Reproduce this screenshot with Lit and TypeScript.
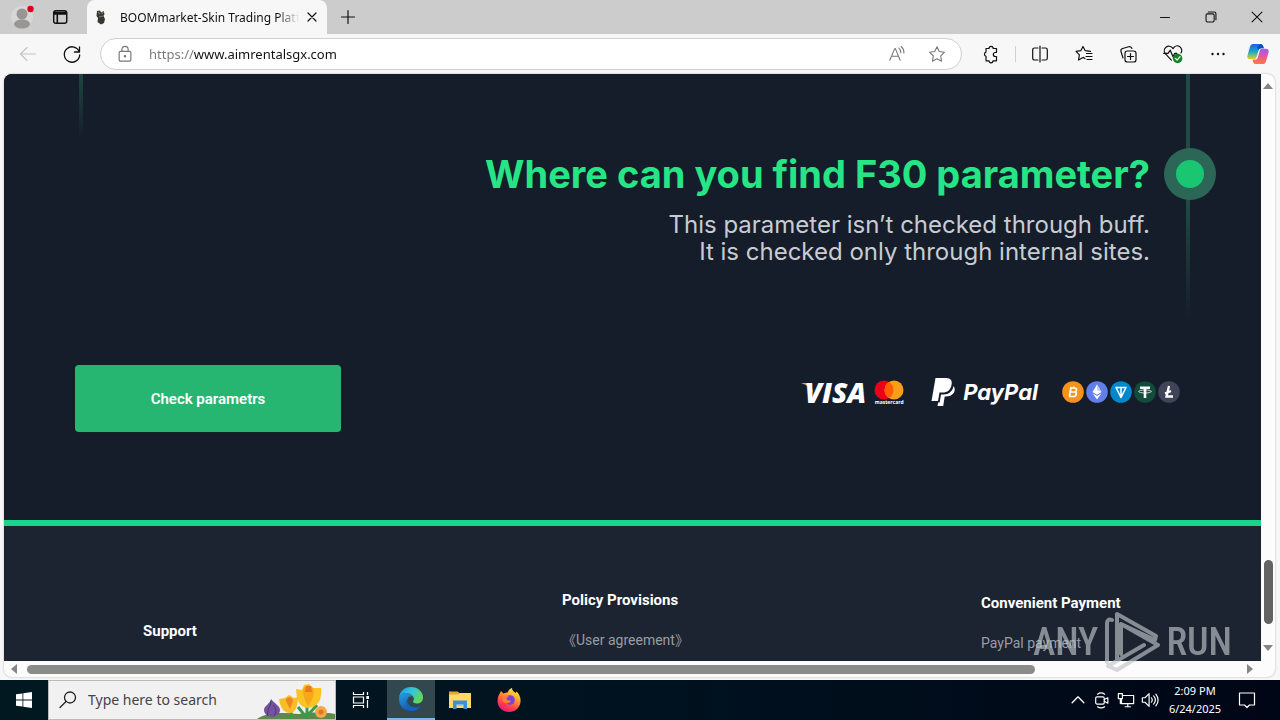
import { LitElement, html, css, svg } from "lit";
import { customElement } from "lit/decorators.js";

const line = (size: number, body: unknown, width = 1) => html`
  <svg width=${size} height=${size} viewBox="0 0 20 20" fill="none" stroke="currentColor"
    stroke-width=${width} stroke-linecap="round" stroke-linejoin="round" aria-hidden="true">${body}</svg>`;

const icons = {
  profile: html`<svg width="24" height="24" viewBox="0 0 24 24" aria-hidden="true">
    <circle cx="12" cy="12" r="11" fill="#d8d7d5"/><circle cx="12" cy="9" r="5.500" fill="#989693"/>
    <ellipse cx="12" cy="19" rx="8" ry="4.500" fill="#989693"/><circle cx="20.500" cy="4" r="3.200" fill="#d8001d"/></svg>`,
  tabs: line(18, svg`<rect x="3" y="3" width="14.500" height="14" rx="2.500" stroke-width="1.600"/><path d="M3.500 5h13.500M3.500 6.500h13.500M7 6v11" stroke-width="1.800"/>`),
  favicon: html`<svg width="16" height="16" viewBox="0 0 16 16" aria-hidden="true">
    <path d="M4 2l3-.5 1 2 2.500-1.500 1 3-1 2 1.500 3-1 4-3 1.500L4.500 13l.5-4-1.500-2z" fill="#343832"/>
    <path d="M5 3l2 2M9 5l1-2M6 8l4-1" stroke="#777d60" stroke-width="1.200"/></svg>`,
  close: line(16, svg`<path d="M5 5l10 10M15 5L5 15" stroke-width="1.500"/>`),
  plus: line(20, svg`<path d="M10 3.500v13M3.500 10h13"/>`, 1.2),
  min: line(18, svg`<path d="M5 10.500h10"/>`, 1.2),
  restore: line(18, svg`<rect x="4.500" y="6.500" width="9" height="9" rx="1.500"/><path d="M7 4.500h6.500a2 2 0 0 1 2 2v6.500"/>`, 1.2),
  closeWin: line(18, svg`<path d="M4.500 4.500l11 11M15.500 4.500l-11 11"/>`, 1.2),
  back: line(20, svg`<path d="M17.500 10h-15M9 3.500L2.500 10 9 16.500"/>`, 1.1),
  reload: line(20, svg`<path d="M17.300 8A7.700 7.700 0 1 0 17.700 11M17.500 3v5h-5"/>`, 1.3),
  lock: line(18, svg`<rect x="3.500" y="7" width="13" height="11" rx="1.500"/><path d="M6.500 7V5a3.500 3.500 0 0 1 7 0v2"/><circle cx="10" cy="12.500" r=".8" fill="currentColor"/>`, 1.3),
  read: line(18, svg`<path d="M2 17L7.500 4h.7L13.500 17M4 12.500h7.500M12 3.500c1.600 1.200 2.200 2.700 2.200 5M14.700 1.700c2.300 2 3 4.300 3 7.300"/>`, 1.2),
  star: line(18, svg`<path d="M10 2l2.500 5.300 5.700.8-4.100 4 1 5.900L10 15.200 4.900 18l1-5.900-4.100-4 5.700-.8z"/>`, 1.2),
  puzzle: line(20, svg`<path d="M5 4.500h3a2.100 2.100 0 0 1 4.200 0h3.300v4h-1.200a2 2 0 0 0 0 4h1.200v4.300h-3.500a2 2 0 0 1-4 0H5v-4.500a2.200 2.200 0 0 1 0-4.200z"/>`, 1.2),
  split: line(20, svg`<path d="M8 4H4.500A1.800 1.800 0 0 0 2.700 5.800v8.400A1.800 1.800 0 0 0 4.500 16H8M12 4h3.500a1.800 1.800 0 0 1 1.800 1.800v8.400a1.800 1.800 0 0 1-1.800 1.800H12M10 2v16"/>`, 1.2),
  favs: line(20, svg`<path d="M11 14.500l-2-1.100-4.500 2.600.9-5.100L2 7.400l4.800-.7L9 2.500l2.200 4.200 5.300.7M12.500 9.500h5.500M12 12.500h6M13 15.500h5"/>`, 1.2),
  collections: line(20, svg`<rect x="7" y="7" width="11" height="11" rx="2.300"/><path d="M12.500 9.500v6M9.500 12.500h6M5 14L3 7.500a2.500 2.500 0 0 1 1.700-3l6-1.800a2.500 2.500 0 0 1 3.200 1.800"/>`, 1.2),
  heart: line(22, svg`<path d="M8.500 15.500L3 9.700A4 4 0 0 1 9.500 4.500L10 5l.5-.5A4 4 0 0 1 17.300 9M1.500 9.500h4l2-3 2.500 6 1.500-3h2"/><circle cx="14.200" cy="14" r="4.300" fill="#128324" stroke="none"/><path d="M12.200 14l1.500 1.500 2.700-3" stroke="#fff"/>`, 1.1),
  more: html`<svg width="20" height="20" viewBox="0 0 20 20" fill="currentColor" aria-hidden="true"><circle cx="4.500" cy="10" r="1.200"/><circle cx="10" cy="10" r="1.200"/><circle cx="15.500" cy="10" r="1.200"/></svg>`,
  copilot: html`<svg width="24" height="24" viewBox="0 0 24 24" aria-hidden="true">
    <defs><linearGradient id="ca" x1="0" y1="0" x2="0" y2="1"><stop stop-color="#1665d8"/><stop offset=".5" stop-color="#18a6cf"/><stop offset="1" stop-color="#e8d31f"/></linearGradient>
    <linearGradient id="cb" x1="0" y1="0" x2="0" y2="1"><stop stop-color="#9a5cf0"/><stop offset=".5" stop-color="#e9569c"/><stop offset="1" stop-color="#ff7a3a"/></linearGradient></defs>
    <path d="M7 2h7.500c1.500 0 2.300 1 2.700 2.300l.6 1.900h-2.500c-1.500 0-2.300.8-2.700 2l-2 6.800c-.5 1.500-1.200 2.300-3 2.300H4.200c-2.500 0-3.400-1.600-2.700-4l2.500-8.500C4.600 2.900 5.500 2 7 2z" fill="url(#ca)"/>
    <path d="M17 22H9.800c-1.500 0-2.300-1-2.700-2.300L6.500 17.800H9c1.500 0 2.300-.8 2.700-2l2-6.800c.5-1.500 1.200-2.300 3-2.300h3.100c2.500 0 3.400 1.600 2.700 4L20 19.200c-.6 1.900-1.500 2.800-3 2.800z" fill="url(#cb)"/>
    <path d="M14.500 2c1.500 0 2.300 1 2.700 2.300l.6 1.900h-2.500c-1.500 0-2.300.8-2.700 2L11 5z" fill="#1549bd"/></svg>`,
  windows: html`<svg width="16" height="16" viewBox="0 0 16 16" fill="#fff" aria-hidden="true"><path d="M0 2.300l6.500-.9v6.200H0zM7.300 1.300L16 0v7.600H7.300zM0 8.400h6.500v6.200L0 13.700zM7.300 8.400H16V16l-8.700-1.300z"/></svg>`,
  search: line(20, svg`<circle cx="12" cy="7.500" r="5.500"/><path d="M8 11.500L2 17.500"/>`, 1.3),
  taskView: html`<svg width="18" height="18" viewBox="0 0 18 18" fill="none" stroke="#fff" stroke-width="1.200" aria-hidden="true"><path d="M1.500 1v2.500h10V1M1.500 17v-2.500h10V17M1.500 6h10v6h-10zM15.500 1v3M15.500 9v8"/><path d="M14.300 5h2.700v3h-2.700z" fill="#fff" stroke="none"/></svg>`,
  edge: html`<svg width="26" height="26" viewBox="0 0 26 26" aria-hidden="true">
    <defs><linearGradient id="ea" x1="0" y1="0" x2="1" y2=".5"><stop stop-color="#1d9bde"/><stop offset=".5" stop-color="#2fc3df"/><stop offset="1" stop-color="#62d957"/></linearGradient>
    <linearGradient id="eb" x1="0" y1="0" x2=".6" y2="1"><stop stop-color="#2a9de4"/><stop offset="1" stop-color="#0d55a8"/></linearGradient></defs>
    <path d="M1 12C1.500 5.500 6.500 1 13 1c7 0 12 5 12 10.500 0 4-3 6-6 6-2.500 0-4-1-4-2 0-.7.900-1 .900-2.500C15.900 10 12 7 8 7c-3.500 0-6 2-7 5z" fill="url(#ea)"/>
    <path d="M1 13C1 9.500 4.500 7 8.500 7c3 0 5.500 1.500 6.500 3.500-3-1.200-6 1-6 4.500 0 4 4 7.500 9 6.500 2-.4 3.500-1.200 4.500-1.500C20.500 23.300 17 25 13 25 6 25 1 20 1 13z" fill="url(#eb)"/>
    <path d="M9.500 12.500c-1 5 2 9 8.500 9 2 0 3.500-1 4.500-1.500C20.500 23.300 17 25 13 25c-5-1-7-8-3.500-12.500z" fill="#1264bd"/></svg>`,
  explorer: html`<svg width="24" height="22" viewBox="0 0 24 22" aria-hidden="true"><path d="M1 2.500h8.500L11.500 4H23v15H1z" fill="#e7a43a"/><path d="M1 5.500h9L12 4h11v15H1z" fill="#ffd869"/><path d="M5 11.500h14V20h-3.500v-4h-7v4H5z" fill="#3c8fd0"/><path d="M8.500 15h7v1.500h-7z" fill="#77b9e6"/></svg>`,
  firefox: html`<svg width="26" height="26" viewBox="0 0 26 26" aria-hidden="true">
    <defs><linearGradient id="fa" x1=".8" y1="0" x2=".3" y2="1"><stop stop-color="#fff24f"/><stop offset=".4" stop-color="#ff9a2b"/><stop offset=".75" stop-color="#ff3b50"/><stop offset="1" stop-color="#e31587"/></linearGradient></defs>
    <path d="M5 4l2.500 2.500c1.500-.8 3-1 4-1C12.500 3.500 14 1.500 16 1c0 2.500 2 3.500 3.500 5l1.200-1.500C23.500 7.500 25 11 24.500 15c-.7 6-5.500 10-11.500 10S1.500 20.500 1.500 14c0-3 1-6 2.500-8z" fill="url(#fa)"/>
    <circle cx="14" cy="13" r="4.800" fill="#7b40d8"/><path d="M7 9c2-1 4.500-.5 6 1-1.500 0-2.500 1-2.500 2 0 1.500 3 1 4.500 2-1.500 2.500-5 3-7.500 1C6 13.500 6 11 7 9z" fill="#ff7d33"/></svg>`,
  flowers: html`<svg width="80" height="38" viewBox="0 0 80 38" aria-hidden="true">
    <path d="M2 38c12-8 28-6 42-5 12-2 26-2 36 0v5z" fill="#5d8a4a"/>
    <path d="M52 36V22M36 38V24M43 26l8 10 11-12" stroke="#3b9a4a" stroke-width="3" fill="none"/>
    <path d="M16 18c4 5 9 7 9 11 0 4-4 7-8 7s-8-3-8-7c0-4 6-6 7-11z" fill="#74529f"/><path d="M16 20c0 6-5 9-3 15M18 24c3 3 4 7 1 11" stroke="#4b3877" fill="none"/>
    <path d="M41 8l6 1 2-5 5-1 4 4 8 0c1 3 0 8-1 12-3 6-8 8-12 8-9-1-11-7-12-19z" fill="#fbc423"/>
    <path d="M48 9c1-6 9-6 11 0 0 6-3 13-6 16-3-4-5-10-5-16z" fill="#f5a91a"/><path d="M50 11l1-6 5 0 1 6z" fill="#ed7a1a"/>
    <path d="M24 18l6-1 4-3 5 3 4-1c0 8-2 16-8 16-7 0-10-7-11-14z" fill="#f9bd2a"/><path d="M31 20c0-5 6-5 7 0l-3 8z" fill="#ee8520"/>
    <circle cx="66" cy="31" r="6" fill="#f0a94d"/><circle cx="66" cy="31" r="2.500" fill="#e8731b"/></svg>`,
  chevron: line(18, svg`<path d="M3.500 13l6.500-6.500 6.500 6.500"/>`, 1.5),
  meet: line(18, svg`<rect x="3" y="6.500" width="9.500" height="8" rx="1.500"/><path d="M12.500 9.500l4-2v6l-4-2M5 3.500Q9 .8 13 3.500M5 17.500q4 2.700 8 0"/>`, 1.3),
  network: line(18, svg`<path d="M7 5h11.500v9H5V9M9 17.500h6M12 14v3.500M1.500 3h4.500v5.500H1.500zM3.700 8.500V14"/>`, 1.3),
  sound: line(18, svg`<path d="M1.500 7.500h3L9 3v14l-4.500-4.500h-3zM11.500 7.500q2 2.500 0 5M14 5.500q4 4.500 0 9M16.500 3.500q5 6.500 0 13"/>`, 1.3),
  note: line(20, svg`<path d="M2.500 3h15v12h-5L10 17.500 7.500 15h-5z"/>`, 1.2),
};

@customElement("app-root")
export class AppRoot extends LitElement {
  static styles = css`
    :host { display: flex; flex-direction: column; height: 100vh; position: relative; overflow: hidden; background: #f7f7f7; color: #111; font-family: "Segoe UI", "Noto Sans", sans-serif; font-size: 12px; }
    * { box-sizing: border-box; }
    button { border: 0; padding: 0; margin: 0; background: none; color: inherit; font: inherit; display: grid; place-items: center; flex: none; }
    svg { display: block; flex: none; }
    input { border: 0; outline: 0; padding: 0; background: none; font: inherit; min-width: 0; }
    a { color: inherit; text-decoration: none; }

    .titlebar { display: flex; height: 34px; background: #ccc; flex: none; }
    .corner { display: flex; align-items: center; gap: 17px; padding: 0 18px 0 10px; }
    .tab { display: flex; align-items: center; gap: 11px; width: 240px; padding: 0 7px 0 6px; background: #f7f7f7; border-radius: 8px 8px 0 0; }
    .tab-title { flex: 1; margin-right: -6px; overflow: hidden; white-space: nowrap; mask-image: linear-gradient(90deg, #000 88%, transparent); -webkit-mask-image: linear-gradient(90deg, #000 88%, transparent); }
    .new-tab { width: 42px; }
    .window { display: flex; margin-left: auto; }
    .window button { width: 46px; }

    .toolbar { display: flex; align-items: center; height: 40px; padding: 0 10px 0 18px; flex: none; }
    .nav { display: flex; gap: 24px; padding-right: 18px; }
    .dim { color: #c3c3c3; }
    .address { flex: 1; display: flex; align-items: center; height: 32px; padding: 0 15px; border: 1px solid #d0d0d0; border-radius: 16px; background: #fff; color: #777; }
    .address input { flex: 1; margin-left: 15px; font-size: 13px; -webkit-text-fill-color: transparent; background: linear-gradient(90deg, #777 45px, #111 45px); -webkit-background-clip: text; background-clip: text; }
    .address button { margin-left: 22px; }
    .tools { display: flex; align-items: center; gap: 24px; padding-left: 19px; }
    .tools .divider { width: 1px; height: 16px; background: #d0d0d0; margin: 0 -10px; }
    .tools .assistant { margin-left: -6px; }

    .frame { flex: 1; min-height: 0; display: grid; grid-template-columns: 1fr 14px; grid-template-rows: 1fr 16px; margin: 0 5px 3px 4px; border-radius: 8px; overflow: hidden; background: #fcfcfc; box-shadow: 0 0 2px #aaa; }
    .view { overflow: hidden; background: #1c2431; color: #fff; font-family: Roboto, sans-serif; }
    .hero { padding: 0 45px 88px 71px; background: #151d2b; border-bottom: 6px solid #1cd38c; }
    .step { display: grid; grid-template-columns: 12px 1fr 52px; column-gap: 14px; height: 291px; }
    .trail { width: 4px; height: 66px; margin-left: 4px; background: linear-gradient(#1e463f, #151d2b); }
    .copy { padding-top: 76px; text-align: right; font-family: Inter, sans-serif; }
    h2 { margin: 0; font-size: 38px; line-height: 48px; font-weight: 700; color: #25e585; }
    .copy p { margin: 13px 0 0; font-size: 24px; line-height: 27px; color: #c8ccd2; }
    .rail { height: 246px; padding-top: 74px; background: linear-gradient(#204c43, #204c43 50%, #151d2b) 22px 0 / 4px 100% no-repeat; }
    .dot { display: grid; place-items: center; width: 52px; height: 52px; border-radius: 50%; background: #2b6656; }
    .dot::before { content: ""; width: 28px; height: 28px; border-radius: 50%; background: #1bc673; }
    .actions { display: flex; justify-content: space-between; align-items: flex-start; padding-right: 36px; }
    .check { width: 266px; height: 67px; border-radius: 4px; background: #26b671; font-size: 15px; font-weight: 600; box-shadow: 0 1px 3px #0b2a20; }
    .pay { display: flex; align-items: center; height: 54px; gap: 8px; }
    .visa { display: flex; align-items: center; }
    .visa-name { margin-left: -8px; font: italic 800 28px/30px "Open Sans", sans-serif; }
    .mc { display: grid; justify-items: center; width: 30px; }
    .mc-name { font: 700 5px/5px "Open Sans", sans-serif; }
    .paypal { display: flex; align-items: center; gap: 7px; margin: 0 16px 0 19px; font: italic 700 22px/30px Inter, sans-serif; }
    .coins { display: flex; gap: 2px; }

    .footer { display: grid; grid-template-columns: repeat(3, 1fr); white-space: nowrap; }
    .col { padding: 64px 0 0 139px; }
    .col.support { padding-top: 95px; }
    .col.payment { padding-top: 67px; }
    h3 { margin: 0; font-size: 15px; line-height: 20px; font-weight: 700; }
    .col a { display: block; margin-top: 20px; font-size: 14px; line-height: 20px; color: #999da3; font-family: Roboto, "Noto Sans CJK SC", sans-serif; }

    .vbar { display: flex; flex-direction: column; align-items: center; justify-content: space-between; padding: 8px 0; color: #858585; }
    .vthumb { width: 9px; height: 64px; margin: auto 0 19px; border-radius: 5px; background: #636363; }
    .hbar { display: flex; align-items: center; padding: 0 6px; color: #858585; }
    .hthumb { flex: 0 0 81%; height: 9px; margin: 0 auto 0 7px; border-radius: 5px; background: #8a8c87; }

    .taskbar { display: flex; height: 40px; flex: none; background: linear-gradient(90deg, #021820, #00121f 50%, #000616); color: #fff; }
    .taskbar > button { width: 49px; }
    .taskbar > .start { width: 48px; }
    .search { display: flex; align-items: center; width: 288px; padding-left: 9px; gap: 10px; border: 1px solid #bbb; background: #f1f1f1; color: #222; }
    .search input { flex: 1; font-size: 14px; line-height: 20px; }
    .search input::placeholder { color: #444; opacity: 1; }
    .taskbar > .active { width: 48px; margin-left: 2px; background: #33474f; border-bottom: 2px solid #76b9ed; }
    .tray { display: flex; align-items: center; gap: 6px; margin-left: auto; padding-right: 23px; }
    .clock { width: 60px; text-align: center; font-size: 11px; line-height: 18px; white-space: nowrap; }
    .tray .notes { margin-left: 6px; }

    .watermark { position: absolute; right: 48px; bottom: 46px; display: flex; align-items: center; gap: 5px; color: #c0c4ca; opacity: .65; pointer-events: none; font: 500 38px/64px "Liberation Sans Narrow", "Roboto Condensed", Roboto, sans-serif; }
  `;

  private arrow(d: string) {
    return html`<svg width="10" height="10" viewBox="0 0 10 10" fill="currentColor" aria-hidden="true"><path d=${d}/></svg>`;
  }

  private coin(color: string, glyph: unknown) {
    return html`<svg width="22" height="22" viewBox="0 0 22 22" aria-hidden="true"><circle cx="11" cy="11" r="10.800" fill=${color}/>${glyph}</svg>`;
  }

  private button(label: string, icon: unknown, cls = "") {
    return html`<button class=${cls} aria-label=${label}>${icon}</button>`;
  }

  render() {
    return html`
      <header class="titlebar">
        <div class="corner">${this.button("Profile", icons.profile)}${this.button("Tab actions", icons.tabs)}</div>
        <div class="tab">${icons.favicon}<span class="tab-title">BOOMmarket-Skin Trading Platform</span>${this.button("Close tab", icons.close)}</div>
        ${this.button("New tab", icons.plus, "new-tab")}
        <div class="window">${this.button("Minimize", icons.min)}${this.button("Restore", icons.restore)}${this.button("Close", icons.closeWin)}</div>
      </header>
      <nav class="toolbar">
        <div class="nav">${this.button("Back", icons.back, "dim")}${this.button("Reload", icons.reload)}</div>
        <div class="address">${icons.lock}<input aria-label="Address" value="https://www.aimrentalsgx.com">${this.button("Read aloud", icons.read)}${this.button("Add to favorites", icons.star)}</div>
        <div class="tools">
          ${this.button("Extensions", icons.puzzle)}<span class="divider"></span>
          ${this.button("Split screen", icons.split)}${this.button("Favorites", icons.favs)}${this.button("Collections", icons.collections)}
          ${this.button("Browser essentials", icons.heart)}${this.button("More", icons.more)}${this.button("Copilot", icons.copilot, "assistant")}
        </div>
      </nav>
      <div class="frame">
        <main class="view">
          <section class="hero">
            <div class="step">
              <div class="trail"></div>
              <div class="copy">
                <h2>Where can you find F30 parameter?</h2>
                <p>This parameter isn’t checked through buff.<br>It is checked only through internal sites.</p>
              </div>
              <div class="rail"><div class="dot"></div></div>
            </div>
            <div class="actions">
              <button class="check">Check parametrs</button>
              <div class="pay">
                <div class="visa"><svg width="12" height="20" viewBox="0 0 12 20" aria-hidden="true"><path d="M0 1h8q2 0 2.500 2L12 11Q8 3 0 1z" fill="#f2a52c"/></svg><span class="visa-name">VISA</span></div>
                <div class="mc">
                  <svg width="30" height="20" viewBox="0 0 30 20" aria-hidden="true"><circle cx="10" cy="10" r="9.500" fill="#eb001b"/><circle cx="20" cy="10" r="9.500" fill="#f79e1b"/><path d="M15 1.900a9.500 9.500 0 0 1 0 16.200 9.500 9.500 0 0 1 0-16.200z" fill="#ff5f00"/></svg>
                  <span class="mc-name">mastercard</span>
                </div>
                <div class="paypal">
                  <svg width="25" height="30" viewBox="0 0 25 30" aria-hidden="true"><path d="M4.500 1h10.500c5 0 6.500 3 5.500 7-1 5-4 7.500-9 7.500H8.500L7 24H.5z" fill="#fff"/><path d="M22.500 9c1.800 2 1.500 5 .2 7-1.800 2.500-4.500 3.500-8 3.500h-1L12.200 29H6.500l.7-3.500h1.500L10 17.500h2.500c5.500 0 9-3 10-8.500z" fill="#fff"/></svg>
                  <span>PayPal</span>
                </div>
                <div class="coins">
                  ${this.coin("#f7931a", svg`<path d="M9 6l-1.500 9.500M12 5.500l-.3 1.500M10.500 16l.3-1M8.500 7h4c3 0 2.500 4-.5 4H9h3.500c3 0 2 4.500-1 4.500H7" stroke="#fff" stroke-width="1.700" fill="none"/>`)}
                  ${this.coin("#627eea", svg`<path d="M11 3.500l4.500 7.500-4.500 2.700L6.500 11zM6.500 12.200L11 15l4.500-2.800L11 18.500z" fill="#fff"/><path d="M11 3.500V9l4.500 2z" fill="#c0cbf7"/>`)}
                  ${this.coin("#0088cc", svg`<path d="M6 6.500h10L11 16.500zM11 7v9" stroke="#fff" stroke-width="1.500" stroke-linejoin="round" fill="none"/>`)}
                  ${this.coin("#124c3b", svg`<path d="M6 5.500h10v2.500h-3.700v9H9.700V8H6z" fill="#fff"/><ellipse cx="11" cy="10.500" rx="6.300" ry="1.500" stroke="#fff" stroke-width=".8" fill="none"/>`)}
                  ${this.coin("#414458", svg`<path d="M11 5l-2.500 10.500h6.500M7 12.500l6-2.500" stroke="#fff" stroke-width="2.300" fill="none"/>`)}
                </div>
              </div>
            </div>
          </section>
          <footer class="footer">
            <div class="col support"><h3>Support</h3></div>
            <div class="col"><h3>Policy Provisions</h3><a href="#agreement">《User agreement》</a></div>
            <div class="col payment"><h3>Convenient Payment</h3><a href="#paypal">PayPal payment</a></div>
          </footer>
        </main>
        <div class="vbar">${this.arrow("M0 7l5-6 5 6z")}<div class="vthumb"></div>${this.arrow("M0 2l5 6 5-6z")}</div>
        <div class="hbar">${this.arrow("M7 0L1 5l6 5z")}<div class="hthumb"></div>${this.arrow("M2 0l6 5-6 5z")}</div>
      </div>
      <footer class="taskbar">
        ${this.button("Start", icons.windows, "start")}
        <label class="search">${icons.search}<input aria-label="Search" placeholder="Type here to search">${icons.flowers}</label>
        ${this.button("Task view", icons.taskView)}${this.button("Edge", icons.edge, "active")}${this.button("File Explorer", icons.explorer)}${this.button("Firefox", icons.firefox)}
        <div class="tray">${this.button("Hidden icons", icons.chevron)}${this.button("Meet now", icons.meet)}${this.button("Network", icons.network)}${this.button("Volume", icons.sound)}
          <div class="clock">2:09 PM<br>6/24/2025</div>${this.button("Notifications", icons.note, "notes")}</div>
      </footer>
      <div class="watermark"><span>ANY</span>
        <svg width="58" height="64" viewBox="0 0 58 64" fill="none" stroke="currentColor" stroke-width="4" stroke-linecap="round" stroke-linejoin="round" aria-hidden="true">
          <path d="M9 10q-5-2-5 4v38M14 51V4l39 22-1 4-34-16v30M18 14l37 21L14 60l-9-4 36-21"/></svg>
        <span>RUN</span></div>
    `;
  }
}
